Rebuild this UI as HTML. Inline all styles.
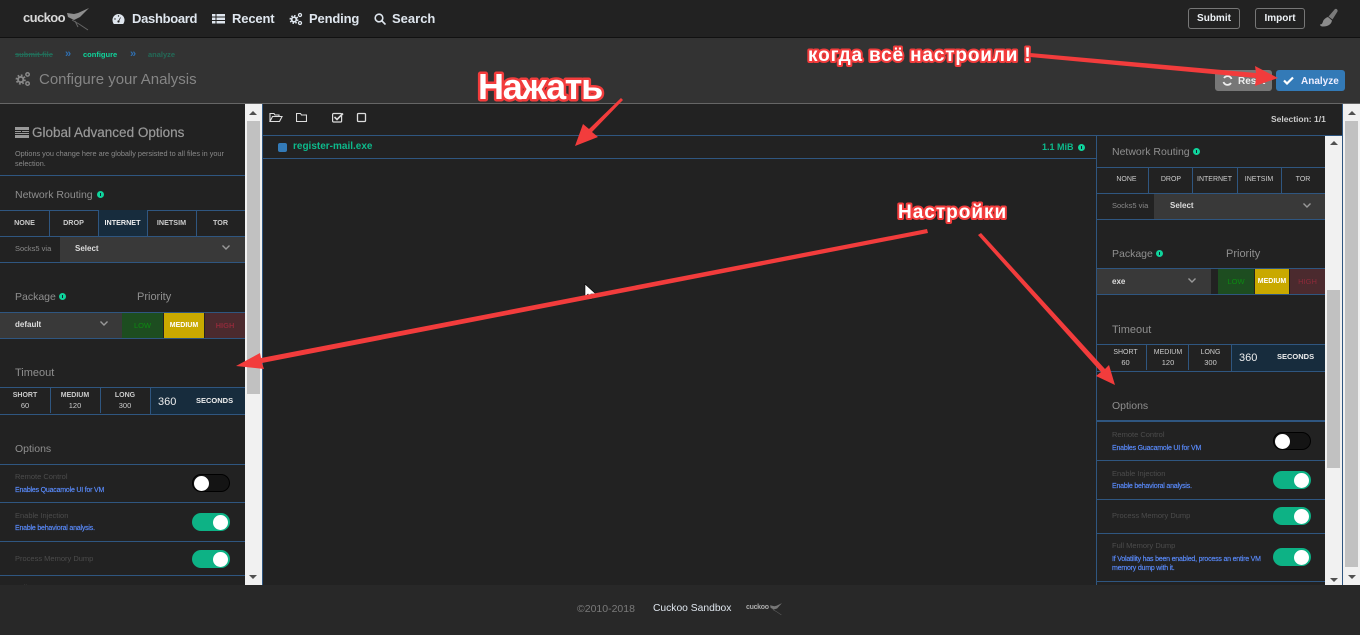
<!DOCTYPE html>
<html lang="ru"><head><meta charset="utf-8"><title>Configure your Analysis</title>
<style>
html,body{margin:0;padding:0;width:1360px;height:635px;overflow:hidden;background:#222}
body{position:relative;font-family:"Liberation Sans","Noto Sans CJK SC",sans-serif}
.b{position:absolute}
.t{position:absolute;white-space:nowrap;line-height:1}
.c{position:absolute;display:flex;flex-direction:column;align-items:center;justify-content:center;box-sizing:border-box;color:#ccc;font-size:7.2px;font-weight:bold;line-height:11px;text-align:center;white-space:nowrap}
.c span{font-size:7.5px}
.r{padding-bottom:2px}
.n{font-size:7px;font-weight:normal}
.h{color:#8f8f8f;font-size:11px}
.h2{color:#8f8f8f;font-size:10.5px}
.dim{color:#4c4c4c;font-size:7.5px}
.blue{color:#5a8cff;font-size:7px;letter-spacing:-.2px;-webkit-text-stroke:.15px #5a8cff}
.line{position:absolute;background:#2f5680;height:1px}
.v{position:absolute;background:#2f5680;width:1px}
.tg{position:absolute;width:38px;height:18px;border-radius:9px;box-sizing:border-box}
.on{background:#0db285}.off{background:#141414;border:1px solid #000}
.tg i{position:absolute;top:2px;width:15px;height:15px;border-radius:50%;background:#fff}
.on i{right:2px;top:1.5px}.off i{left:1px;top:0.5px}
.i{position:absolute;width:7px;height:7px;border-radius:50%;background:#0fd49b}
.i:after{content:"";position:absolute;left:3px;top:2px;width:1px;height:3px;background:#123}
.sb{position:absolute;background:#f1f1f1}
.th{position:absolute;background:#c1c1c1}
.up,.dn{position:absolute;width:0;height:0;border-left:4px solid transparent;border-right:4px solid transparent}
.up{border-bottom:4px solid #505050}.dn{border-top:4px solid #505050}
</style></head><body>

<!-- top bar -->
<div class="b" style="left:0;top:0;width:1360px;height:37px;background:#222"></div>
<div class="b" style="left:0;top:37px;width:1360px;height:1px;background:#111"></div>
<div class="b" style="left:0;top:38px;width:1360px;height:65px;background:#333"></div>
<div class="b" style="left:0;top:103px;width:1360px;height:1px;background:#666"></div>

<!-- logo -->
<div class="t" style="left:23px;top:11px;font-size:13px;font-weight:bold;color:#d8d8d8;letter-spacing:-.6px">cuckoo</div>
<svg class="b" style="left:64px;top:6px" width="28" height="26" viewBox="0 0 28 26" fill="none"><path d="M3 7l7 1 4-1 11-5-9 9-6 3-6-3z" fill="#8f8f8f"/><path d="M8 14l7 4 9 6M11 15l3 6" stroke-width="1" stroke="#666"/></svg>

<!-- nav -->
<svg class="b" style="left:112px;top:13px" width="13" height="12" viewBox="0 0 13 12"><path d="M6.5 1A6 6 0 0 0 .5 7c0 1.500.5 2.800 1.300 4h9.400c.8-1.200 1.300-2.500 1.300-4a6 6 0 0 0-6-6z" fill="#dfe6ee"/><circle cx="6.500" cy="8.500" r="1.100" fill="#222"/><path d="M6.500 8.500l2-4" stroke="#222" stroke-width=".8"/><circle cx="3" cy="6" r=".7" fill="#222"/><circle cx="6.500" cy="3" r=".7" fill="#222"/></svg>
<div class="t" style="left:132px;top:11.500px;font-size:13px;font-weight:bold;color:#dfe6ee;letter-spacing:-.3px">Dashboard</div>
<svg class="b" style="left:212px;top:13px" width="13" height="12" viewBox="0 0 13 12" fill="#dfe6ee"><path d="M0 1h3.500v2.500H0zM4.500 1H13v2.500H4.500zM0 4.500h3.500V7H0zM4.500 4.500H13V7H4.500zM0 8h3.500v2.500H0zM4.500 8H13v2.500H4.500z"/></svg>
<div class="t" style="left:232px;top:11.500px;font-size:13px;font-weight:bold;color:#dfe6ee;letter-spacing:-.15px">Recent</div>
<svg class="b" style="left:289px;top:12px" width="14" height="14" viewBox="0 0 14 14" fill="none" stroke="#dfe6ee"><circle cx="5" cy="7.500" r="3.700" stroke-width="1.600" stroke-dasharray="1.500 1.400"/><circle cx="5" cy="7.500" r="2.300" stroke-width="1.700"/><circle cx="11" cy="3" r="1.500" stroke-width="1.300"/><circle cx="11" cy="11" r="1.500" stroke-width="1.300"/></svg>
<div class="t" style="left:309px;top:11.500px;font-size:13px;font-weight:bold;color:#dfe6ee;letter-spacing:-.15px">Pending</div>
<svg class="b" style="left:374px;top:13px" width="12" height="12" viewBox="0 0 12 12" fill="none" stroke="#dfe6ee" stroke-width="1.600"><circle cx="5" cy="5" r="3.800"/><path d="M8 8l3.500 3.500"/></svg>
<div class="t" style="left:392px;top:11.500px;font-size:13px;font-weight:bold;color:#dfe6ee">Search</div>

<div class="c" style="left:1188px;top:8px;width:52px;height:21px;border:1px solid #777;border-radius:3px;color:#eef2f6;font-size:10px">Submit</div>
<div class="c" style="left:1255px;top:8px;width:50px;height:21px;border:1px solid #777;border-radius:3px;color:#eef2f6;font-size:10px">Import</div>
<svg class="b" style="left:1319px;top:8px" width="20" height="20" viewBox="0 0 20 20"><path d="M16 1c1.500-.5 3 .5 2.500 2.500l-5 8-4-3z" fill="#7a7a7a"/><path d="M9 9l4 3.500c-.5 3-3 6-9 6-2 0-3-1-3-2 2 0 2.500-1.500 3-3 .5-2 3-4 5-4.500z" fill="#8c8c8c"/></svg>

<!-- subheader -->
<div class="t" style="left:15px;top:51px;font-size:7.5px;font-weight:bold;color:#236b58;text-decoration:line-through">submit-file</div>
<div class="t" style="left:65px;top:49px;font-size:11px;font-weight:bold;color:#2f6fb0">»</div>
<div class="t" style="left:83px;top:51px;font-size:7.5px;font-weight:bold;color:#0fd49b">configure</div>
<div class="t" style="left:130px;top:49px;font-size:11px;font-weight:bold;color:#2f6fb0">»</div>
<div class="t" style="left:148px;top:51px;font-size:7.5px;font-weight:bold;color:#236b58">analyze</div>
<svg class="b" style="left:15px;top:71px" width="16" height="16" viewBox="0 0 14 14" fill="none" stroke="#888"><circle cx="5" cy="7.500" r="3.700" stroke-width="1.600" stroke-dasharray="1.500 1.400"/><circle cx="5" cy="7.500" r="2.300" stroke-width="1.700"/><circle cx="11" cy="3" r="1.500" stroke-width="1.300"/><circle cx="11" cy="11" r="1.500" stroke-width="1.300"/></svg>
<div class="t" style="left:39px;top:72px;font-size:15px;color:#858585">Configure your Analysis</div>

<div class="c" style="left:1215px;top:70px;width:57px;height:21px;background:#777;border-radius:3px;color:#eee;font-size:10px;align-items:flex-start;padding:1px 0 0 23px">Reset</div>
<svg class="b" style="left:1222px;top:75px" width="11" height="11" viewBox="0 0 11 11" fill="none" stroke="#eee" stroke-width="1.800"><path d="M9.500 4A4.200 4.200 0 0 0 2 3M1.500 7A4.200 4.200 0 0 0 9 8"/></svg>
<div class="c" style="left:1276px;top:70px;width:69px;height:21px;background:#337ab7;border-radius:3px;color:#eef;font-size:10px;align-items:flex-start;padding:1px 0 0 25px">Analyze</div>
<svg class="b" style="left:1283px;top:76px" width="11" height="9" viewBox="0 0 11 9" fill="none" stroke="#fff" stroke-width="2.200"><path d="M1 4.500l3 3L10 1.500"/></svg>

<!-- main area -->
<div class="b" style="left:0;top:104px;width:1360px;height:481px;background:#222"></div>

<!-- left panel -->
<svg class="b" style="left:15px;top:127px" width="14" height="11" viewBox="0 0 14 11" fill="#999"><path d="M0 0h14v3H0zM0 4h6v1H0zM7 4h7v1H7zM0 6h14v1H0zM0 8h14v3H0z"/></svg>
<div class="t" style="left:32px;top:126px;font-size:13.500px;color:#999;-webkit-text-stroke:.2px #999">Global Advanced Options</div>
<div class="t" style="left:15px;top:149px;font-size:7.300px;color:#8a8a8a;line-height:10px;white-space:normal;width:220px">Options you change here are globally persisted to all files in your selection.</div>
<div class="line" style="left:0;top:175px;width:245px"></div>
<div class="t h2" style="left:15px;top:190px">Network Routing</div><div class="i" style="left:97px;top:191px"></div>

<div class="line" style="left:0;top:210px;width:245px"></div>
<div class="c" style="left:98px;top:210px;width:49px;height:26px;background:#172c3d"></div>
<div class="c r" style="left:0;top:210px;width:49px;height:26px">NONE</div>
<div class="c r" style="left:49px;top:210px;width:49px;height:26px">DROP</div>
<div class="c r" style="left:98px;top:210px;width:49px;height:26px;color:#eee">INTERNET</div>
<div class="c r" style="left:147px;top:210px;width:49px;height:26px">INETSIM</div>
<div class="c r" style="left:196px;top:210px;width:49px;height:26px">TOR</div>
<div class="v" style="left:49px;top:210px;height:26px"></div><div class="v" style="left:98px;top:210px;height:26px"></div><div class="v" style="left:147px;top:210px;height:26px"></div><div class="v" style="left:196px;top:210px;height:26px"></div>
<div class="line" style="left:0;top:236px;width:245px"></div>
<div class="t" style="left:15px;top:245px;font-size:7.500px;color:#8a8a8a">Socks5 via</div>
<div class="b" style="left:60px;top:237px;width:185px;height:25px;background:#393939"></div>
<div class="t" style="left:75px;top:245px;font-size:8px;font-weight:bold;color:#ddd">Select</div>
<svg class="b" style="left:222px;top:245px" width="8" height="5" viewBox="0 0 8 5" fill="none" stroke="#999" stroke-width="1.400"><path d="M.5.500L4 4 7.500.500"/></svg>
<div class="line" style="left:0;top:262px;width:245px"></div>

<div class="t h2" style="left:15px;top:292px">Package</div><div class="i" style="left:59px;top:293px"></div>
<div class="t h" style="left:137px;top:292px">Priority</div>
<div class="line" style="left:0;top:312px;width:245px"></div>
<div class="b" style="left:0;top:313px;width:122px;height:25px;background:#393939"></div>
<div class="t" style="left:15px;top:321px;font-size:8px;font-weight:bold;color:#ddd">default</div>
<svg class="b" style="left:100px;top:321px" width="8" height="5" viewBox="0 0 8 5" fill="none" stroke="#999" stroke-width="1.400"><path d="M.5.500L4 4 7.500.500"/></svg>
<div class="c" style="left:122px;top:313px;width:41px;height:25px;background:#1d4d20;color:#0d8a12;font-weight:normal;font-size:7.500px">LOW</div>
<div class="c" style="left:164px;top:313px;width:40px;height:25px;background:#c9a900;color:#fff;font-size:7px">MEDIUM</div>
<div class="c" style="left:205px;top:313px;width:40px;height:25px;background:#4b2a2e;color:#8d2a3a;font-size:7.500px">HIGH</div>
<div class="line" style="left:0;top:338px;width:245px"></div>

<div class="t h" style="left:15px;top:368px">Timeout</div>
<div class="line" style="left:0;top:387px;width:245px"></div>
<div class="c" style="left:150px;top:388px;width:95px;height:26px;background:#172c3d"></div>
<div class="c" style="left:0;top:388px;width:50px;height:26px;line-height:10px;font-size:7px">SHORT<span style="font-weight:normal">60</span></div>
<div class="c" style="left:50px;top:388px;width:50px;height:26px;line-height:10px;font-size:7px">MEDIUM<span style="font-weight:normal">120</span></div>
<div class="c" style="left:100px;top:388px;width:50px;height:26px;line-height:10px;font-size:7px">LONG<span style="font-weight:normal">300</span></div>
<div class="v" style="left:50px;top:388px;height:25px"></div><div class="v" style="left:100px;top:388px;height:25px"></div><div class="v" style="left:150px;top:388px;height:26px"></div>
<div class="t" style="left:158px;top:397px;font-size:11px;color:#eee">360</div>
<div class="t" style="left:196px;top:397px;font-size:7.500px;font-weight:bold;color:#eee">SECONDS</div>
<div class="line" style="left:0;top:414px;width:245px"></div>

<div class="t h2" style="left:15px;top:444px">Options</div>
<div class="line" style="left:0;top:464px;width:245px"></div>
<div class="t dim" style="left:15px;top:473px">Remote Control</div>
<div class="t blue" style="left:15px;top:487px">Enables Quacamole UI for VM</div>
<div class="tg off" style="left:192px;top:474px"><i></i></div>
<div class="line" style="left:0;top:502px;width:245px"></div>
<div class="t dim" style="left:15px;top:512px">Enable Injection</div>
<div class="t blue" style="left:15px;top:525px">Enable behavioral analysis.</div>
<div class="tg on" style="left:192px;top:513px"><i></i></div>
<div class="line" style="left:0;top:541px;width:245px"></div>
<div class="t dim" style="left:15px;top:555px">Process Memory Dump</div>
<div class="tg on" style="left:192px;top:550px"><i></i></div>
<div class="line" style="left:0;top:575px;width:245px"></div>
<div class="t dim" style="left:15px;top:584px;height:1px;overflow:hidden">Full Memory Dump</div>

<!-- left scrollbar -->
<div class="sb" style="left:245px;top:104px;width:17px;height:481px"></div>
<div class="th" style="left:247px;top:121px;width:13px;height:273px"></div>
<div class="up" style="left:249px;top:111px"></div>
<div class="dn" style="left:249px;top:575px"></div>
<div class="v" style="left:262px;top:104px;height:481px"></div>

<!-- center -->
<svg class="b" style="left:269px;top:112px" width="14" height="11" viewBox="0 0 14 11" fill="none" stroke="#ddd" stroke-width="1.100"><path d="M1 9.500V1.500h4l1 1.500h4v1.500M1 9.500h9.500L13 4.500H3.500z"/></svg>
<svg class="b" style="left:296px;top:112px" width="11" height="11" viewBox="0 0 11 11" fill="none" stroke="#ddd" stroke-width="1.100"><path d="M.5 9.500V1.500h4l1 1.500h5v6.500z"/></svg>
<svg class="b" style="left:332px;top:112px" width="12" height="11" viewBox="0 0 12 11" fill="none" stroke="#ddd" stroke-width="1.200"><rect x=".6" y="1.500" width="9" height="8.500" rx="1"/><path d="M2.500 5l2.500 2.500L11 1.500" stroke-width="1.600"/></svg>
<svg class="b" style="left:356px;top:112px" width="11" height="11" viewBox="0 0 11 11" fill="none" stroke="#ddd" stroke-width="1.300"><rect x="1.500" y="1.500" width="8" height="8" rx="1"/></svg>
<div class="t" style="left:1271px;top:115px;font-size:8.500px;font-weight:bold;color:#ccc">Selection: 1/1</div>
<div class="line" style="left:263px;top:135px;width:1079px"></div>
<div class="b" style="left:278px;top:143px;width:9px;height:9px;background:#337ab7;border-radius:2px"></div>
<div class="t" style="left:293px;top:141.500px;font-size:10px;font-weight:bold;color:#0dba8c">register-mail.exe</div>
<div class="t" style="left:1042px;top:143px;font-size:9px;font-weight:bold;color:#0dba8c">1.1 MiB</div>
<div class="i" style="left:1078px;top:144px"></div>
<div class="line" style="left:263px;top:158px;width:834px"></div>
<div class="v" style="left:1096px;top:135px;height:450px"></div>

<!-- right panel -->
<div class="t h2" style="left:1112px;top:147px">Network Routing</div><div class="i" style="left:1193px;top:148px"></div>
<div class="line" style="left:1097px;top:167px;width:228px"></div>
<div class="c r n" style="left:1105px;top:167px;width:43px;height:26px">NONE</div>
<div class="c r n" style="left:1149px;top:167px;width:44px;height:26px">DROP</div>
<div class="c r n" style="left:1192px;top:167px;width:45px;height:26px">INTERNET</div>
<div class="c r n" style="left:1237px;top:167px;width:44px;height:26px">INETSIM</div>
<div class="c r n" style="left:1281px;top:167px;width:44px;height:26px">TOR</div>
<div class="v" style="left:1148px;top:167px;height:26px"></div><div class="v" style="left:1192px;top:167px;height:26px"></div><div class="v" style="left:1237px;top:167px;height:26px"></div><div class="v" style="left:1281px;top:167px;height:26px"></div>
<div class="line" style="left:1097px;top:193px;width:228px"></div>
<div class="t" style="left:1112px;top:202px;font-size:7.500px;color:#8a8a8a">Socks5 via</div>
<div class="b" style="left:1154px;top:194px;width:171px;height:25px;background:#393939"></div>
<div class="t" style="left:1170px;top:202px;font-size:8px;font-weight:bold;color:#ddd">Select</div>
<svg class="b" style="left:1303px;top:203px" width="8" height="5" viewBox="0 0 8 5" fill="none" stroke="#999" stroke-width="1.400"><path d="M.5.500L4 4 7.500.500"/></svg>
<div class="line" style="left:1097px;top:219px;width:228px"></div>

<div class="t h2" style="left:1112px;top:249px">Package</div><div class="i" style="left:1156px;top:250px"></div>
<div class="t h" style="left:1226px;top:249px">Priority</div>
<div class="line" style="left:1097px;top:268px;width:228px"></div>
<div class="b" style="left:1097px;top:269px;width:114px;height:25px;background:#393939"></div>
<div class="t" style="left:1112px;top:278px;font-size:8px;font-weight:bold;color:#ddd">exe</div>
<svg class="b" style="left:1188px;top:278px" width="8" height="5" viewBox="0 0 8 5" fill="none" stroke="#999" stroke-width="1.400"><path d="M.5.500L4 4 7.500.500"/></svg>
<div class="c" style="left:1218px;top:269px;width:36px;height:25px;background:#1d4d20;color:#0d8a12;font-weight:normal;font-size:7.500px">LOW</div>
<div class="c" style="left:1255px;top:269px;width:34px;height:25px;background:#c9a900;color:#fff;font-size:7px">MEDIUM</div>
<div class="c" style="left:1290px;top:269px;width:35px;height:25px;background:#4b2a2e;color:#8d2a3a;font-weight:normal;font-size:7.500px">HIGH</div>
<div class="line" style="left:1097px;top:294px;width:228px"></div>

<div class="t h" style="left:1112px;top:325px">Timeout</div>
<div class="line" style="left:1097px;top:344px;width:228px"></div>
<div class="c" style="left:1231px;top:345px;width:94px;height:26px;background:#172c3d"></div>
<div class="c n" style="left:1101px;top:345px;width:49px;height:26px;line-height:10px">SHORT<span>60</span></div>
<div class="c n" style="left:1147px;top:345px;width:42px;height:26px;line-height:10px">MEDIUM<span>120</span></div>
<div class="c n" style="left:1189px;top:345px;width:43px;height:26px;line-height:10px">LONG<span>300</span></div>
<div class="v" style="left:1146px;top:345px;height:25px"></div><div class="v" style="left:1188px;top:345px;height:25px"></div><div class="v" style="left:1231px;top:345px;height:26px"></div>
<div class="t" style="left:1239px;top:353px;font-size:11px;color:#eee">360</div>
<div class="t" style="left:1277px;top:353px;font-size:7.500px;font-weight:bold;color:#eee">SECONDS</div>
<div class="line" style="left:1097px;top:371px;width:228px"></div>

<div class="t h2" style="left:1112px;top:401px">Options</div>
<div class="line" style="left:1097px;top:420px;width:228px;height:2px"></div>
<div class="t dim" style="left:1112px;top:431px">Remote Control</div>
<div class="t blue" style="left:1112px;top:445px">Enables Guacamole UI for VM</div>
<div class="tg off" style="left:1273px;top:432px"><i></i></div>
<div class="line" style="left:1097px;top:460px;width:228px"></div>
<div class="t dim" style="left:1112px;top:470px">Enable Injection</div>
<div class="t blue" style="left:1112px;top:483px">Enable behavioral analysis.</div>
<div class="tg on" style="left:1273px;top:471px"><i></i></div>
<div class="line" style="left:1097px;top:499px;width:228px"></div>
<div class="t dim" style="left:1112px;top:512px">Process Memory Dump</div>
<div class="tg on" style="left:1273px;top:507px"><i></i></div>
<div class="line" style="left:1097px;top:533px;width:228px"></div>
<div class="t dim" style="left:1112px;top:542px">Full Memory Dump</div>
<div class="t blue" style="left:1112px;top:555px;line-height:9px;width:156px;white-space:normal">If Volatility has been enabled, process an entire VM memory dump with it.</div>
<div class="tg on" style="left:1273px;top:548px"><i></i></div>
<div class="line" style="left:1097px;top:581px;width:228px"></div>

<!-- right scrollbars -->
<div class="sb" style="left:1325px;top:136px;width:17px;height:449px"></div>
<div class="th" style="left:1327px;top:290px;width:13px;height:178px"></div>
<div class="up" style="left:1330px;top:141px"></div>
<div class="dn" style="left:1330px;top:578px"></div>
<div class="v" style="left:1342px;top:104px;height:481px"></div>
<div class="sb" style="left:1343px;top:104px;width:17px;height:481px"></div>
<div class="th" style="left:1345px;top:121px;width:13px;height:446px"></div>
<div class="up" style="left:1348px;top:111px"></div>
<div class="dn" style="left:1348px;top:575px"></div>

<!-- footer -->
<div class="b" style="left:0;top:585px;width:1360px;height:50px;background:#282828"></div>
<div class="t" style="left:577px;top:603.500px;font-size:10.500px;color:#7a7a7a">©2010-2018</div>
<div class="t" style="left:653px;top:603.500px;font-size:10.300px;color:#dfe6ee">Cuckoo Sandbox</div>
<div class="t" style="left:746px;top:604px;font-size:7px;font-weight:bold;color:#aaa;letter-spacing:-.3px">cuckoo</div>
<svg class="b" style="left:768px;top:602px" width="16" height="14" viewBox="0 0 28 26"><path d="M3 6l8 2 4-1 10-5-9 10-6 2-6-3z" fill="#777"/><path d="M8 14l7 4 9 6" stroke="#666" fill="none"/></svg>

<!-- cursor -->
<svg class="b" style="left:584px;top:283px" width="13" height="20" viewBox="0 0 13 20"><path d="M1 1v13l3-3 2 5h2l-1-5h5z" fill="#fff" stroke="#000" stroke-width=".6"/></svg>

<!-- annotations -->
<svg class="b" style="left:0;top:0" width="1360" height="635" viewBox="0 0 1360 635">
<g fill="#f23c3c">
<polygon points="1030,53 1256,73 1255,66 1278,78 1255,86 1256,78 1030,57"/>
<polygon points="621,98 623,100 592,132 598,137 575,146 583,124 589,129"/>
<polygon points="927,229 928,233 262,363 264,369 236,366 260,353 261,358"/>
<polygon points="978,235 981,233 1105,369 1109,365 1115,385 1096,376 1101,372"/>
</g>
<g font-family="Liberation Sans, sans-serif" font-weight="bold" fill="#fff" stroke="#f23c3c" paint-order="stroke fill" stroke-linejoin="round">
<text x="478" y="99" font-size="36" letter-spacing="-1.300" stroke-width="5">Нажать</text>
<text x="808" y="61" font-size="19" letter-spacing=".85" stroke-width="4">когда всё настроили !</text>
<text x="898" y="218" font-size="19" letter-spacing="1" stroke-width="4">Настройки</text>
</g>
</svg>
</body></html>
